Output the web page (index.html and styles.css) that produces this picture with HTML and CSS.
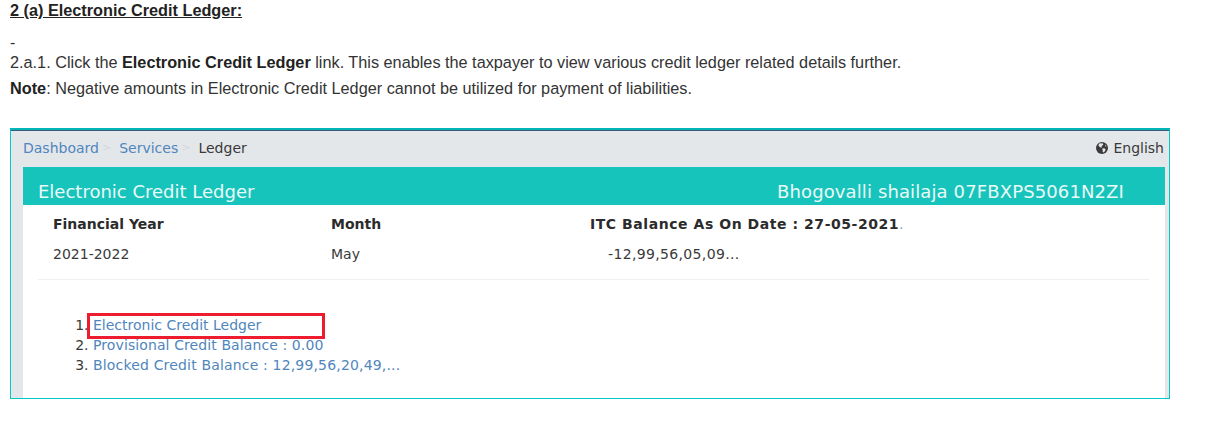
FILE: index.html
```html
<!DOCTYPE html>
<html lang="en">
<head>
<meta charset="utf-8">
<title>Electronic Credit Ledger</title>
<link rel="stylesheet" href="styles.css">
</head>
<body>
<h2 class="heading">2 (a) Electronic Credit Ledger:</h2>
<div class="dash">-</div>
<p class="line">2.a.1. Click the <b>Electronic Credit Ledger</b> link. This enables the taxpayer to view various credit ledger related details further.</p>
<p class="line"><b>Note</b>: Negative amounts in Electronic Credit Ledger cannot be utilized for payment of liabilities.</p>
<div class="shot">
  <div class="crumbs">
    <nav class="trail">
      <a class="link">Dashboard</a><span class="sep">&gt;</span>
      <a class="link">Services</a><span class="sep">&gt;</span>
      <span>Ledger</span>
    </nav>
    <div class="lang">
      <svg class="globe" viewBox="0 0 12 12" width="12" height="12" aria-hidden="true">
        <circle cx="6" cy="6" r="6" fill="#3a3a3a"/>
        <path d="M3.2 1.6 L6.6 1.2 L7.4 2.8 L5.6 4 L5.9 5.6 L4 5.2 L2.4 3.6Z M6.4 6.2 L9 6.4 L9.6 7.8 L8 10.4 L6.8 10 L6.6 8Z M9 2.4 L10.6 4.4 L9.4 4.6Z" fill="#e4e7ea"/>
      </svg>
      <span>English</span>
    </div>
  </div>
  <div class="panel">
    <div class="banner">
      <span>Electronic Credit Ledger</span>
      <span class="taxpayer">Bhogovalli shailaja 07FBXPS5061N2ZI</span>
    </div>
    <div class="summary">
      <div class="col col-year"><strong>Financial Year</strong><span>2021-2022</span></div>
      <div class="col col-month"><strong>Month</strong><span>May</span></div>
      <div class="col col-itc"><strong class="itc">ITC Balance As On Date : 27-05-2021<i class="dot">.</i></strong><span class="amount">-12,99,56,05,09...</span></div>
    </div>
    <hr class="rule">
    <ol class="items">
      <li class="marked"><a class="link">Electronic Credit Ledger</a><span class="redbox"></span></li>
      <li><a class="link spread-a">Provisional Credit Balance : 0.00</a></li>
      <li><a class="link spread-b">Blocked Credit Balance : 12,99,56,20,49,...</a></li>
    </ol>
  </div>
</div>
</body>
</html>
```
FILE: styles.css
```css
* { box-sizing: border-box; }
html, body { margin: 0; background: #fff; }
body {
  padding: 2px 0 0 10px;
  font-family: "Liberation Sans", Arial, sans-serif;
  font-size: 16.26px;
  color: #333;
  height: 428px;
  overflow: hidden;
}
.heading {
  margin: 0;
  font-size: 16.26px;
  line-height: 17px;
  font-weight: 700;
  text-decoration: underline;
  color: #222;
}
.dash { height: 12px; margin-top: 18px; line-height: 11px; font-size: 16px; }
.line { margin: 0; line-height: 26px; height: 26px; white-space: nowrap; }
.line b { color: #222; }
.shot {
  width: 1160px;
  height: 271px;
  margin-top: 27px;
  border: 1px solid #00c9c9;
  border-top: 2px solid #00b5b5;
  background: #e4e7ea;
  padding: 0 4px 0 12px;
  font-family: "DejaVu Sans", Verdana, sans-serif;
  font-size: 14px;
  color: #3a3a3a;
  box-shadow: inset 0 1px 0 #3f5a78;
}
.crumbs {
  display: flex;
  justify-content: space-between;
  align-items: center;
  height: 37px;
  padding-bottom: 2px;
  white-space: nowrap;
}
.trail { display: flex; align-items: center; }
.link { color: #4f86bd; }
.sep { color: #d3d7db; font-size: 11px; margin: 0 8px 0 3px; }
.lang { display: flex; align-items: center; gap: 5px; margin-right: 1px; }
.globe { display: block; }
.panel { background: #fff; height: 231px; }
.banner {
  display: flex;
  justify-content: space-between;
  align-items: flex-end;
  height: 38px;
  padding: 0 41px 2px 15px;
  background: #17c4bb;
  color: #eafaf8;
  font-size: 18px;
  line-height: 22px;
}
.taxpayer { letter-spacing: 0.12px; }
.summary { display: flex; padding: 10px 0 0 30px; }
.col { display: flex; flex-direction: column; gap: 11px; line-height: 19px; }
.col strong { color: #2b2b2b; font-weight: 700; font-size: 14px; }
.col-year { width: 278px; }
.col-month { width: 259px; }
.col strong.itc { letter-spacing: 0.55px; }
.amount { padding-left: 18px; letter-spacing: 0.35px; }
.dot { font-style: normal; font-weight: 400; color: #7fa8c9; }
.rule { border: 0; border-top: 1px solid #eef0f1; margin: 15px 16px 0 15px; }
.items { margin: 35px 0 0; padding: 0 0 0 70px; line-height: 20px; }
.spread-a { letter-spacing: 0.1px; }
.spread-b { letter-spacing: 0.17px; }
.marked { position: relative; }
.redbox {
  position: absolute;
  left: -6px;
  top: -2px;
  width: 238px;
  height: 26px;
  border: 3px solid #ed1c2e;
}
```
